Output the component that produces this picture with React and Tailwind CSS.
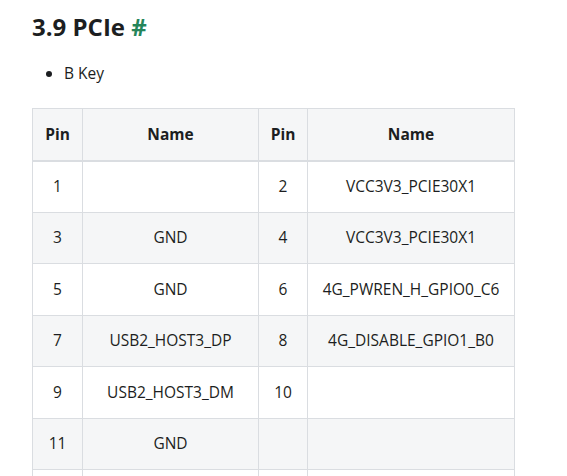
import React from "react";

const rows = [
  ["1", "", "2", "VCC3V3_PCIE30X1"],
  ["3", "GND", "4", "VCC3V3_PCIE30X1"],
  ["5", "GND", "6", "4G_PWREN_H_GPIO0_C6"],
  ["7", "USB2_HOST3_DP", "8", "4G_DISABLE_GPIO1_B0"],
  ["9", "USB2_HOST3_DM", "10", ""],
  ["11", "GND", "", ""],
  ["", "", "", ""],
];

export default function App() {
  return (
    <div
      className="min-h-screen bg-white pl-8 pt-[11px] text-[#1c1e21]"
      style={{ fontFamily: '"Open Sans", "Noto Sans", sans-serif' }}
    >
      <h3 className="text-[24px] font-bold leading-[32px] text-[#1c1e21]">
        3.9 PCIe <span className="text-[#25855a]">#</span>
      </h3>
      <ul className="mt-[18px] list-disc pl-[32px] text-[15.5px] leading-[24px]">
        <li>B Key</li>
      </ul>
      <table className="mt-[23px] w-[482px] table-fixed border-collapse text-[15.5px] text-[#1c1e21]">
        <thead>
          <tr className="bg-[#f5f6f7]">
            <th className="w-[50px] border border-b-2 border-[#dadde1] h-[52px] font-bold">Pin</th>
            <th className="w-[176px] border border-b-2 border-[#dadde1] font-bold">Name</th>
            <th className="w-[49px] border border-b-2 border-[#dadde1] font-bold">Pin</th>
            <th className="w-[207px] border border-b-2 border-[#dadde1] font-bold">Name</th>
          </tr>
        </thead>
        <tbody>
          {rows.map((r, i) => (
            <tr key={i} className={i % 2 === 1 ? "bg-[#f5f6f7]" : "bg-white"}>
              {r.map((c, j) => (
                <td
                  key={j}
                  className="h-[51.5px] border border-[#dadde1] text-center whitespace-nowrap"
                >
                  {c}
                </td>
              ))}
            </tr>
          ))}
        </tbody>
      </table>
    </div>
  );
}
